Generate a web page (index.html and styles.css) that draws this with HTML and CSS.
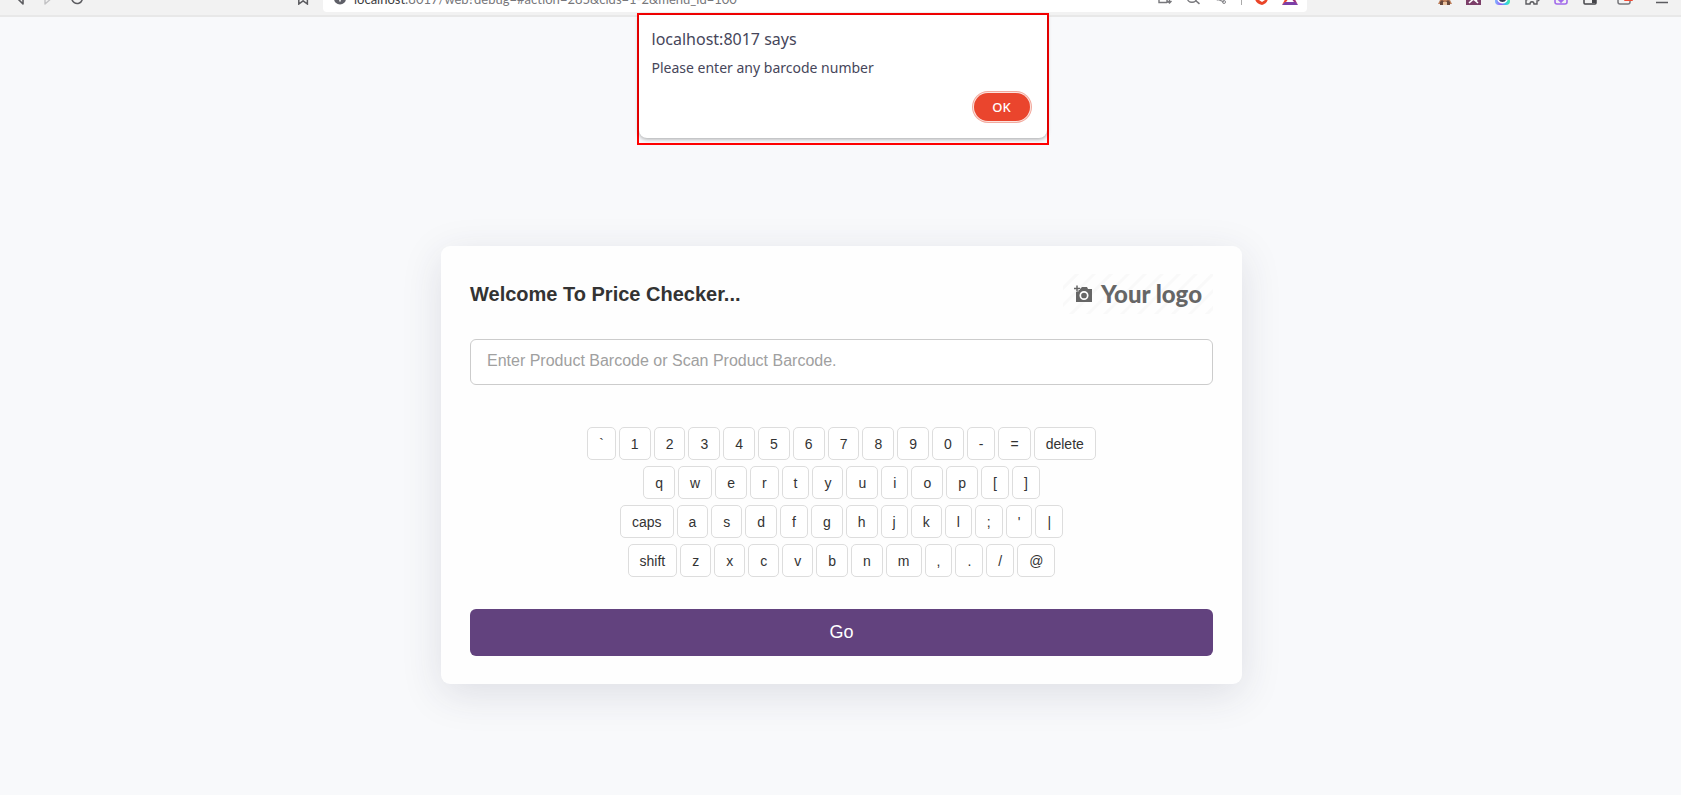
FILE: index.html
```
<!DOCTYPE html>
<html lang="en">
<head>
<meta charset="utf-8">
<title>Price Checker</title>
<link rel="stylesheet" href="styles.css">
</head>
<body>
<header class="toolbar">
  <nav class="toolbar-nav" aria-label="Navigation">
    <button class="tool" aria-label="Back"><svg viewBox="0 0 16 16"><path d="M10 15L3 8l7-7z" fill="none" stroke="#5c5c60" stroke-width="1.6" stroke-linejoin="round"/></svg></button>
    <button class="tool" aria-label="Forward"><svg viewBox="0 0 16 16"><path d="M4 15V1l8 7z" fill="none" stroke="#c2c2c4" stroke-width="1.4" stroke-linejoin="round"/></svg></button>
    <button class="tool" aria-label="Reload"><svg viewBox="0 0 16 16"><path d="M13.2 11a5.4 5.4 0 1 1-.6-5M13 2v4H9" fill="none" stroke="#5c5c60" stroke-width="1.6"/></svg></button>
    <button class="tool tool-end" aria-label="Bookmark"><svg viewBox="0 0 16 16"><path d="M3.8 1.500h8.600v13.500l-4.300-3.200-4.300 3.200z" fill="none" stroke="#5c5c60" stroke-width="1.500"/></svg></button>
  </nav>
  <div class="address">
    <svg class="info" viewBox="0 0 16 16"><circle cx="8" cy="9.600" r="6" fill="#5f6068"/><path d="M8 8.500v4" stroke="#fff" stroke-width="1.500"/></svg>
    <span class="url"><b>localhost</b>:8017/web?debug=#action=285&amp;cids=1-2&amp;menu_id=100</span>
    <div class="address-tools">
      <button class="tool" aria-label="Translate"><svg viewBox="0 0 16 16"><path d="M2 3v10.500h8M4 11V6M7 11V6M10 9v5M12.500 8v6M10.500 12l2 2 2-2" fill="none" stroke="#77777b" stroke-width="1.400"/></svg></button>
      <button class="tool" aria-label="Zoom"><svg viewBox="0 0 16 16"><circle cx="7" cy="8.500" r="4.800" fill="none" stroke="#77777b" stroke-width="1.400"/><path d="M10.500 11.500l4 3.300" stroke="#77777b" stroke-width="1.500"/></svg></button>
      <button class="tool" aria-label="Share"><svg viewBox="0 0 16 16"><path d="M12 3L4 10l7 3" fill="none" stroke="#88888c" stroke-width="1.300"/><circle cx="11" cy="13" r="1.500" fill="none" stroke="#88888c"/><circle cx="4.500" cy="10.500" r="1" fill="#88888c"/></svg></button>
      <span class="divider"></span>
      <button class="tool" aria-label="Shields"><svg viewBox="0 0 16 16"><path d="M1 0h13v9c0 4-3 6-6 7-4-1-7-3-7-7z" fill="#ea4428"/><path d="M5 8h6v3l-3 2-3-2z" fill="#fff"/><path d="M7 8h2v3H7z" fill="#ea4428"/></svg></button>
      <button class="tool" aria-label="Rewards"><svg viewBox="0 0 16 16"><path d="M8 1L0 16l5-4 3-6z" fill="#ef4a2c"/><path d="M8 1l8 15-5-4-3-6z" fill="#a0307c"/><path d="M0 16l3-3h10l3 3z" fill="#7b3fa8"/><path d="M8 7l3 6H5z" fill="#fff"/></svg></button>
    </div>
  </div>
  <div class="extensions">
    <button class="tool" aria-label="Fox extension"><svg viewBox="0 0 16 16"><path d="M1 5h14l-2 6 2 4H1l2-4z" fill="#bd7f5b"/><path d="M3 13l2-2 2 2-1 3H3zM13 13l-2-2-2 2 1 3h3z" fill="#68483c"/><path d="M6 13h4v3H6z" fill="#e9c3a0"/></svg></button>
    <button class="tool" aria-label="Tools extension"><svg viewBox="0 0 16 16"><rect y="1" width="15" height="15" fill="#7c3f69"/><path d="M3 14l4.500-4 4.500 4M4 7l7 5" fill="none" stroke="#fff" stroke-width="1.600"/></svg></button>
    <button class="tool" aria-label="Color extension"><svg viewBox="0 0 16 16"><defs><linearGradient id="rainbow"><stop stop-color="#7db7ff"/><stop offset=".4" stop-color="#9b5cf6"/><stop offset=".7" stop-color="#37c7ee"/><stop offset="1" stop-color="#3ef0a0"/></linearGradient></defs><rect y="1" width="15" height="15" rx="4" fill="url(#rainbow)"/><circle cx="7.500" cy="9" r="4.700" fill="#333c55" stroke="#fff" stroke-width="1.600"/></svg></button>
    <button class="tool" aria-label="Extensions"><svg viewBox="0 0 16 16"><path d="M2 4h3c0-3 5-3 5 0h3v4c3 0 3 4 0 4v3h-3c0-3-4-3-4 0H2v-4c2 0 2-3 0-3z" fill="none" stroke="#5c5c60" stroke-width="1.400"/></svg></button>
    <button class="tool" aria-label="Download"><svg viewBox="0 0 16 16"><path d="M2 9v4q0 2 2 2h8q2 0 2-2V9M8 5v8M5 10l3 3 3-3" fill="none" stroke="#a26bea" stroke-width="1.600"/></svg></button>
    <button class="tool" aria-label="Sidebar"><svg viewBox="0 0 16 16"><rect x="2" y="3" width="12" height="12" rx="1" fill="none" stroke="#46464a" stroke-width="1.500"/><path d="M10 3h4v11h-4z" fill="#46464a"/></svg></button>
    <button class="tool tool-wallet" aria-label="Wallet"><svg viewBox="0 0 16 16"><rect x="1" y="4" width="12" height="11" rx="2" fill="none" stroke="#77777b" stroke-width="1.500"/><rect x="7" y="3" width="9" height="9" rx="1" fill="#ef4a35"/></svg></button>
    <button class="tool tool-menu" aria-label="Menu"><svg viewBox="0 0 16 16"><path d="M2 3.500h12M2 8.500h12M2 13.500h12" stroke="#5c5c60" stroke-width="1.400"/></svg></button>
  </div>
</header>

<section class="alert" role="alertdialog" aria-labelledby="alert-title" aria-describedby="alert-text">
  <div class="alert-box">
    <h2 class="alert-title" id="alert-title">localhost:8017 says</h2>
    <p class="alert-text" id="alert-text">Please enter any barcode number</p>
    <button class="alert-ok">OK</button>
  </div>
</section>

<main class="page">
  <form class="card">
    <div class="card-head">
      <h1 class="card-title"><label for="barcode">Welcome To Price Checker...</label></h1>
      <div class="logo">
        <svg class="logo-icon" viewBox="0 0 18 18"><path d="M3 4h3l2-2h5l1 2h4v13H2V7h1z" fill="#666"/><path d="M0 3.500h6M3 .500v6" stroke="#fefefe" stroke-width="3"/><path d="M0 3.500h6M3 .500v6" stroke="#666" stroke-width="1.500"/><circle cx="10" cy="10.500" r="3.700" fill="#666" stroke="#fff" stroke-width="1.700"/></svg>
        <span>Your logo</span>
      </div>
    </div>
    <input class="barcode" id="barcode" type="text" placeholder="Enter Product Barcode or Scan Product Barcode.">
    <div class="keyboard">
      <div class="row"><button type="button" class="key">`</button><button type="button" class="key">1</button><button type="button" class="key">2</button><button type="button" class="key">3</button><button type="button" class="key">4</button><button type="button" class="key">5</button><button type="button" class="key">6</button><button type="button" class="key">7</button><button type="button" class="key">8</button><button type="button" class="key">9</button><button type="button" class="key">0</button><button type="button" class="key">-</button><button type="button" class="key">=</button><button type="button" class="key">delete</button></div>
      <div class="row"><button type="button" class="key">q</button><button type="button" class="key">w</button><button type="button" class="key">e</button><button type="button" class="key">r</button><button type="button" class="key">t</button><button type="button" class="key">y</button><button type="button" class="key">u</button><button type="button" class="key">i</button><button type="button" class="key">o</button><button type="button" class="key">p</button><button type="button" class="key">[</button><button type="button" class="key">]</button></div>
      <div class="row"><button type="button" class="key">caps</button><button type="button" class="key">a</button><button type="button" class="key">s</button><button type="button" class="key">d</button><button type="button" class="key">f</button><button type="button" class="key">g</button><button type="button" class="key">h</button><button type="button" class="key">j</button><button type="button" class="key">k</button><button type="button" class="key">l</button><button type="button" class="key">;</button><button type="button" class="key">'</button><button type="button" class="key">|</button></div>
      <div class="row"><button type="button" class="key">shift</button><button type="button" class="key">z</button><button type="button" class="key">x</button><button type="button" class="key">c</button><button type="button" class="key">v</button><button type="button" class="key">b</button><button type="button" class="key">n</button><button type="button" class="key">m</button><button type="button" class="key">,</button><button type="button" class="key">.</button><button type="button" class="key">/</button><button type="button" class="key">@</button></div>
    </div>
    <button class="go" type="submit">Go</button>
  </form>
</main>
</body>
</html>
```
FILE: styles.css
```
* { box-sizing: border-box; }
body {
  margin: 0;
  min-height: 100vh;
  background: #f8f9fb;
  color: #333;
  font-family: "Liberation Sans", Arial, sans-serif;
}
h1, h2, p { margin: 0; }
button, input { font-family: inherit; }

.toolbar {
  display: grid;
  grid-template-columns: 323px 1fr 374px;
  grid-template-rows: 15px;
  align-items: end;
  height: 17px;
  overflow: hidden;
  background: #f2f2f2;
  border-bottom: 2px solid #e8e8e8;
}
.tool {
  flex: none;
  padding: 0;
  border: 0;
  background: none;
  line-height: 0;
}
.tool svg, .info { width: 16px; height: 16px; display: block; }
.toolbar-nav {
  display: flex;
  gap: 12px;
  padding: 0 12px 10px 13px;
}
.tool-end { margin-left: auto; }
.address {
  display: flex;
  align-items: flex-end;
  height: 32px;
  margin-bottom: 3px;
  padding: 0 9px 7px 9px;
  background: #fff;
  border-radius: 4px;
}
.url {
  margin-left: 6px;
  font: 13px/12px Lato, sans-serif;
  color: #77777b;
  white-space: nowrap;
}
.url b { font-weight: 400; color: #3c3c40; }
.address-tools {
  display: flex;
  align-items: flex-end;
  gap: 12px;
  margin-left: auto;
}
.divider { width: 1px; height: 16px; background: #aaa; }
.extensions {
  display: flex;
  gap: 13px;
  padding: 0 11px 10px;
  justify-content: flex-end;
}
.tool-wallet { margin-left: 6px; }
.tool-menu { margin-left: 8px; }

/* Alert dialog over the page */
.alert {
  position: absolute;
  top: 13px;
  left: calc(50% - 204px);
  width: 412px;
  padding-bottom: 5px;
  border: 2px solid #f00;
}
.alert-box {
  display: flex;
  flex-direction: column;
  padding: 12px 16px 17px 13px;
  background: #fff;
  border-radius: 0 0 8px 8px;
  box-shadow: 0 1px 4px rgba(0, 0, 0, .35);
  color: #46465a;
  font-family: "Noto Sans", sans-serif;
}
.alert-title { font-size: 16px; line-height: 24px; font-weight: 400; }
.alert-text { margin-top: 6px; font-size: 14px; line-height: 22px; }
.alert-ok {
  align-self: flex-end;
  width: 56px;
  height: 28px;
  margin: 14px 1px 0 0;
  padding: 0;
  border: 0;
  border-radius: 14px;
  background: #ea452d;
  box-shadow: 0 0 0 1px #fbe3df, 0 0 0 2px #f3aa9e;
  color: #fff;
  font: 500 13px/28px "Noto Sans", sans-serif;
}

.page { padding: 229px 15px 32px 17px; }
.card {
  max-width: 801px;
  margin: 0 auto;
  padding: 28px 29px;
  background: #fefefe;
  border-radius: 9px;
  box-shadow: 0 10px 40px rgba(50, 45, 75, .13);
}
.card-head {
  display: flex;
  align-items: center;
  justify-content: space-between;
}
.card-title { font-size: 20px; line-height: 24px; }
.logo {
  display: flex;
  align-items: center;
  gap: 9px;
  height: 40px;
  padding: 0 11px;
  background: repeating-linear-gradient(135deg, #fefefe 0 8px, #f9f9f9 9px 11px, #fefefe 12px);
  color: #666;
  font: 900 24px/28px Lato, sans-serif;
}
.logo-icon { width: 18px; height: 18px; }
.barcode {
  display: block;
  width: 100%;
  height: 46px;
  margin-top: 25px;
  padding: 0 16px 3px;
  border: 1px solid #ccc;
  border-radius: 6px;
  background: #fff;
  color: #333;
  font-size: 16px;
}
.barcode::placeholder { color: #a0a0a0; }
.keyboard {
  display: grid;
  gap: 6px;
  margin: 42px 0 32px;
}
.row { display: flex; justify-content: center; gap: 3px; }
.key {
  height: 33px;
  padding: 0 11px;
  border: 1px solid #ddd;
  border-radius: 5px;
  background: #fff;
  color: #333;
  font-size: 14px;
}
.go {
  display: block;
  width: 100%;
  height: 47px;
  border: 0;
  border-radius: 6px;
  background: #62427e;
  color: #fff;
  font-size: 18px;
}
```
